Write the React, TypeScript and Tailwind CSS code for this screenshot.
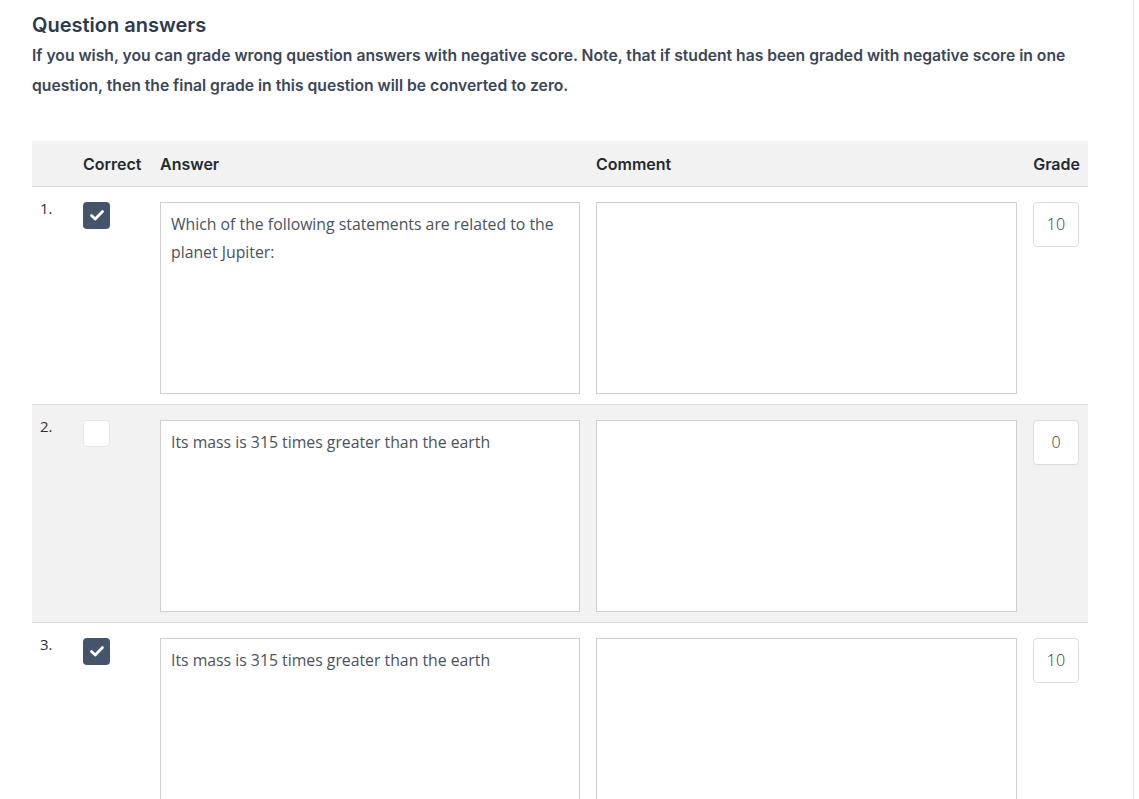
interface Row {
  id: number;
  correct: boolean;
  answer: string;
  grade: string;
}

const rows: Row[] = [
  { id: 1, correct: true, answer: "Which of the following statements are related to the planet Jupiter:", grade: "10" },
  { id: 2, correct: false, answer: "Its mass is 315 times greater than the earth", grade: "0" },
  { id: 3, correct: true, answer: "Its mass is 315 times greater than the earth", grade: "10" },
];

const App = () => {
  return (
    <div className="min-h-[799px] w-[1134px] border-r border-[#e3e3e3] bg-white">
      <div className="pl-8 pt-[11px]">
        <h2 className="font-['Inter',sans-serif] text-[20px] font-semibold leading-[28px] text-[#2c3a4f]">
          Question answers
        </h2>
        <p className="mt-[2px] w-[1045px] font-['Inter',sans-serif] text-[15.7px] font-semibold leading-[30px] text-[#3a4658]">
          If you wish, you can grade wrong question answers with negative score. Note, that if student has been
          graded with negative score in one question, then the final grade in this question will be converted to zero.
        </p>

        <table className="mt-[40px] w-[1056px] border-collapse font-['Open_Sans',sans-serif]">
          <thead>
            <tr className="h-[45px] border-b border-[#dadada] bg-[#f2f2f2] font-['Inter',sans-serif] text-[16px] font-semibold text-[#252a31]">
              <th className="w-[43px] px-2"></th>
              <th className="w-[77px] px-2 pt-[2px] text-left font-semibold">Correct</th>
              <th className="w-[436px] px-2 pt-[2px] text-left font-semibold">Answer</th>
              <th className="w-[437px] px-2 pt-[2px] text-left font-semibold">Comment</th>
              <th className="w-[63px] px-2 pt-[2px] text-right font-semibold">Grade</th>
            </tr>
          </thead>
          <tbody>
            {rows.map((row) => (
              <tr
                key={row.id}
                className={`border-b border-[#dadada] align-top ${row.id === 2 ? "bg-[#f2f2f2]" : "bg-white"}`}
              >
                <td className="px-2 pb-[10px] pt-[10px] text-[15px] text-[#333]">{row.id}.</td>
                <td className="px-2 pb-[10px] pt-[15px]">
                  {row.correct ? (
                    <div className="flex h-[27px] w-[27px] items-center justify-center rounded-[4px] bg-[#44546a]">
                      <svg width="18" height="18" viewBox="0 0 18 18" fill="none">
                        <path
                          d="M3.5 9.5 L7.2 13 L14.5 5.5"
                          stroke="white"
                          strokeWidth="2.8"
                          strokeLinecap="round"
                          strokeLinejoin="round"
                        />
                      </svg>
                    </div>
                  ) : (
                    <div className="h-[27px] w-[27px] rounded-[4px] border border-[#e6e6e6] bg-white"></div>
                  )}
                </td>
                <td className="px-2 pb-[10px] pt-[15px]">
                  <div className="h-[192px] w-[420px] border border-[#cfcfcf] bg-white px-[10px] pt-[7px] text-[15.8px] leading-[28px] text-[#4a5260]">
                    {row.answer}
                  </div>
                </td>
                <td className="px-2 pb-[10px] pt-[15px]">
                  <div className="h-[192px] w-[421px] border border-[#cfcfcf] bg-white"></div>
                </td>
                <td className="px-2 pb-[10px] pt-[15px]">
                  <div className="flex h-[45px] w-[46px] items-center justify-center rounded-[4px] border border-[#dcdcdc] bg-white text-[16px] font-light text-[#333]">
                    {row.grade}
                  </div>
                </td>
              </tr>
            ))}
          </tbody>
        </table>
      </div>
    </div>
  );
};

export default App;
